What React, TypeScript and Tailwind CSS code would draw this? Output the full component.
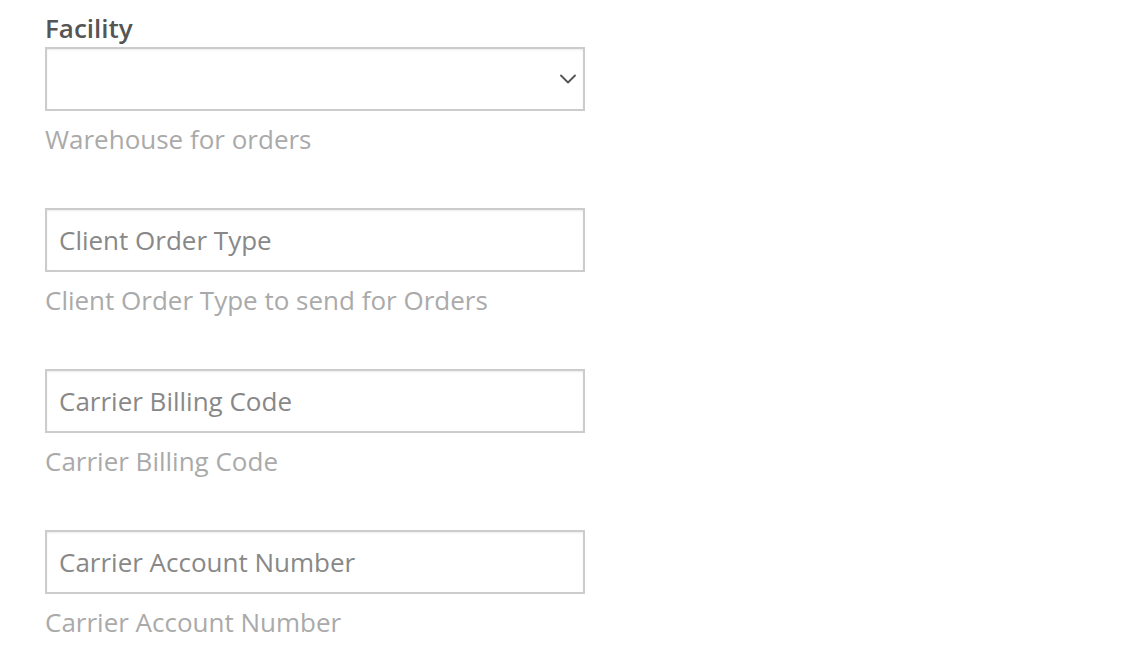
import { ChevronDown } from 'lucide-react';

const fields = [
  { placeholder: 'Client Order Type', help: 'Client Order Type to send for Orders' },
  { placeholder: 'Carrier Billing Code', help: 'Carrier Billing Code' },
  { placeholder: 'Carrier Account Number', help: 'Carrier Account Number' },
];

const boxClass =
  'block w-[540px] h-[64px] border-2 border-[#cccccc] bg-white px-3 text-[26px] text-[#555] shadow-[inset_0_1px_2px_rgba(0,0,0,0.08)] outline-none';

export default function App() {
  return (
    <div className="min-h-screen bg-white px-[45px] pt-[10px] font-['Open_Sans',sans-serif] leading-[36px]">
      <div>
        <label htmlFor="facility" className="block text-[26px] font-semibold text-[#555] mb-px">
          Facility
        </label>
        <div className="relative w-[540px]">
          <select id="facility" className={`${boxClass} appearance-none`} defaultValue="">
            <option value=""></option>
          </select>
          <ChevronDown
            className="absolute right-[3px] top-1/2 -translate-y-1/2 w-[28px] h-[28px] text-[#555] pointer-events-none"
            strokeWidth={1.6}
          />
        </div>
        <p className="mt-[10px] text-[26px] text-[#aaa]">Warehouse for orders</p>
      </div>

      {fields.map((f) => (
        <div key={f.placeholder} className="mt-[51px]">
          <input
            type="text"
            placeholder={f.placeholder}
            className={`${boxClass} placeholder:text-[#888]`}
          />
          <p className="mt-[10px] text-[26px] text-[#aaa]">{f.help}</p>
        </div>
      ))}
    </div>
  );
}
